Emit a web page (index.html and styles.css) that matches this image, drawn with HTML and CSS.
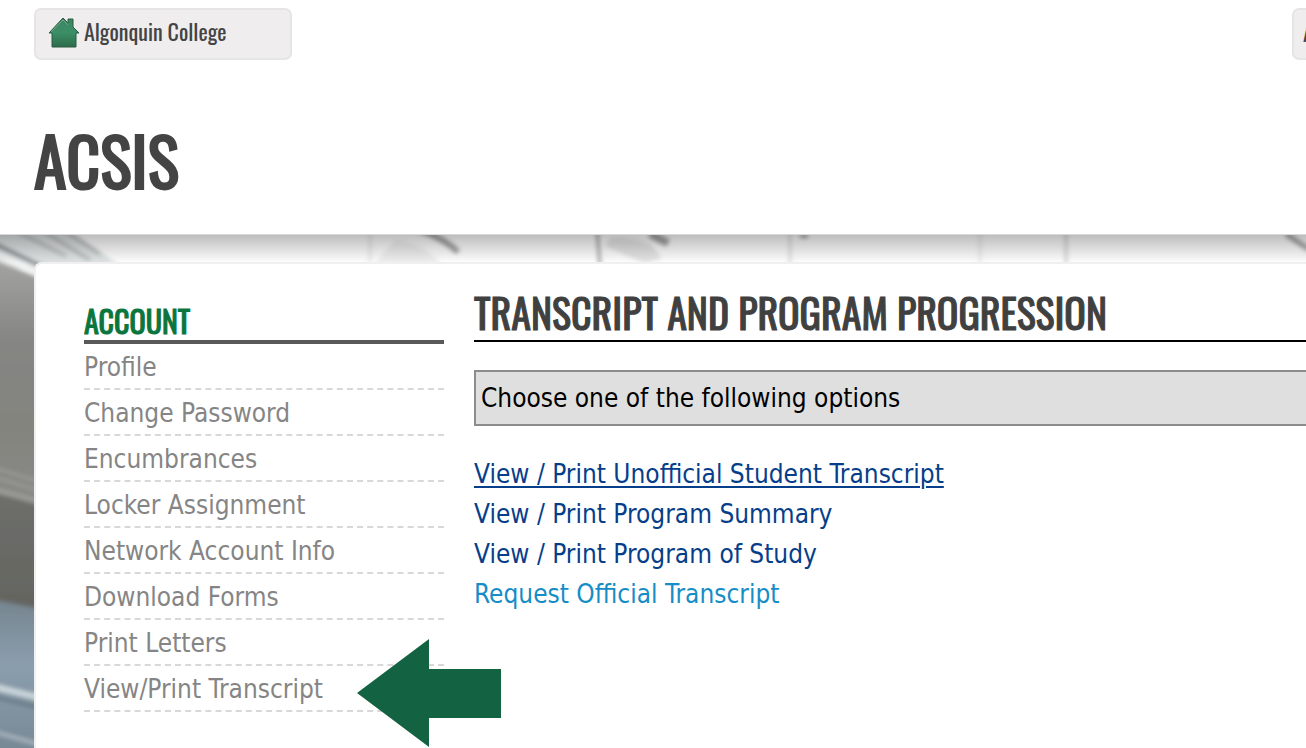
FILE: index.html
```html
<!DOCTYPE html>
<html lang="en">
<head>
    <meta charset="UTF-8">
    <meta name="viewport" content="width=device-width, initial-scale=1.0">
    <title>ACSIS</title>
    <link rel="stylesheet" href="styles.css">
</head>
<body>
    <header class="header">
        <div class="topbar">
            <a class="tab" href="#">
                <svg class="home" viewBox="0 0 32 32" aria-hidden="true">
                    <defs>
                        <linearGradient id="roof" x1="0" y1="0" x2="0" y2="1">
                            <stop offset="0" stop-color="#3f8462"/>
                            <stop offset="0.5" stop-color="#3b8f67"/>
                            <stop offset="1" stop-color="#2d6b4b"/>
                        </linearGradient>
                    </defs>
                    <path d="M1 17 L15 2 L20 7 V3 H25 V11 L31 17 H28 V31 H4 V17 Z" fill="url(#roof)" stroke="#285c41" stroke-width="1"/>
                    <path d="M3 16 L15 4 L20 9" fill="none" stroke="#6ba88a" stroke-width="1"/>
                </svg>
                <span>Algonquin College</span>
            </a>
            <a class="tab tab-next" href="#">A</a>
        </div>
        <h1 class="title">ACSIS</h1>
    </header>
    <div class="stage">
        <svg class="backdrop" aria-hidden="true">
            <defs>
                <linearGradient id="wall" x1="0" y1="0" x2="0" y2="1">
                    <stop offset="0" stop-color="#a3a3a1"/>
                    <stop offset="0.3" stop-color="#858583"/>
                    <stop offset="0.6" stop-color="#84847f"/>
                    <stop offset="1" stop-color="#8b8b88"/>
                </linearGradient>
                <linearGradient id="beam" x1="0" y1="0" x2="0" y2="1">
                    <stop offset="0" stop-color="#6e6f6b"/>
                    <stop offset="1" stop-color="#63635f"/>
                </linearGradient>
                <linearGradient id="glass" x1="0" y1="0" x2="0" y2="1">
                    <stop offset="0" stop-color="#76858f"/>
                    <stop offset="0.4" stop-color="#8b9eae"/>
                    <stop offset="1" stop-color="#758591"/>
                </linearGradient>
                <filter id="soft" filterUnits="userSpaceOnUse" x="-20" y="-20" width="1400" height="600"><feGaussianBlur stdDeviation="2"/></filter>
            </defs>
            <rect width="100%" height="100%" fill="#ffffff"/>
            <g filter="url(#soft)">
                <path d="M-10 -10 H60 L125 35 H-10 Z" fill="#dfe3e4"/>
                <path d="M-5 26 L50 48 V300 H-5 Z" fill="url(#wall)"/>
                <path d="M-5 10 L45 34" stroke="#7d8284" stroke-width="4"/>
                <path d="M-5 20 L45 42" stroke="#f2f3f3" stroke-width="6"/>
                <path d="M14 -4 L66 22 M38 -6 L90 26 M62 -5 L100 20" stroke="#b0b4b4" stroke-width="3" fill="none"/>
                <path d="M-5 234 L40 248 M-5 243 L40 257" stroke="#a0a09c" stroke-width="2"/>
                <path d="M-5 257 L50 272 V390 H-5 Z" fill="url(#beam)"/>
                <path d="M-5 256 L40 268" stroke="#9c9d98" stroke-width="5"/>
                <path d="M-5 366 L50 377 V530 H-5 Z" fill="url(#glass)"/>
                <path d="M-5 453 L45 465" stroke="#ccd7dc" stroke-width="6"/>
                <path d="M-5 463 L45 475" stroke="#6a7b87" stroke-width="4"/>
                <path d="M-5 498 L45 512" stroke="#aebbc4" stroke-width="3"/>
            </g>
            <g filter="url(#soft)" fill="none" stroke="#a3a3a3">
                <path d="M370 -5 V32 M980 -5 V32" stroke="#e8e8e8" stroke-width="3"/>
                <path d="M395 6 Q425 8 445 35 H370 Z" fill="#f0f0f0" stroke="none"/>
                <path d="M420 -4 Q445 5 458 18" stroke-width="6"/>
                <path d="M597 -5 L600 32" stroke-width="3"/>
                <path d="M610 4 Q630 2 650 10 L662 24 L645 30 L605 12" fill="#e6e6e6" stroke="none"/>
                <path d="M650 0 L668 9" stroke-width="8"/>
                <path d="M790 -5 V32" stroke="#dcdcdc" stroke-width="3"/>
                <path d="M800 2 H808" stroke-width="4"/>
                <path d="M1066 -5 V32" stroke="#d4d4d4" stroke-width="3"/>
                <path d="M1286 0 L1310 16" stroke-width="5"/>
            </g>
        </svg>
        <main class="card">
            <nav class="sidebar" aria-labelledby="account">
                <h2 class="sidebar-title" id="account">ACCOUNT</h2>
                <ul class="menu">
                    <li class="menu-item"><a href="#">Profile</a></li>
                    <li class="menu-item"><a href="#">Change Password</a></li>
                    <li class="menu-item"><a href="#">Encumbrances</a></li>
                    <li class="menu-item"><a href="#">Locker Assignment</a></li>
                    <li class="menu-item"><a href="#">Network Account Info</a></li>
                    <li class="menu-item"><a href="#">Download Forms</a></li>
                    <li class="menu-item"><a href="#">Print Letters</a></li>
                    <li class="menu-item">
                        <a href="#">View/Print Transcript</a>
                        <svg class="arrow" viewBox="0 0 144 108" aria-hidden="true">
                            <path d="M0 54 L72 0 V30 H144 V79 H72 V108 Z" fill="#136342"/>
                        </svg>
                    </li>
                </ul>
            </nav>
            <section class="content">
                <h2 class="content-title">TRANSCRIPT AND PROGRAM PROGRESSION</h2>
                <p class="notice">Choose one of the following options</p>
                <ul class="options">
                    <li><a class="current" href="#">View / Print Unofficial Student Transcript</a></li>
                    <li><a href="#">View / Print Program Summary</a></li>
                    <li><a href="#">View / Print Program of Study</a></li>
                    <li><a class="request" href="#">Request Official Transcript</a></li>
                </ul>
            </section>
        </main>
    </div>
</body>
</html>
```
FILE: styles.css
```css
*{
    box-sizing: border-box;
}
body{
    margin: 0;
    min-height: 100vh;
    display: flex;
    flex-direction: column;
    overflow: hidden;
    background-color: #fff;
    font-family: Tahoma, "DejaVu Sans Condensed", "Noto Sans", sans-serif;
    font-size: 26px;
}
h1, h2, p, ul{
    margin: 0;
    padding: 0;
}
h1, h2{
    font-weight: 400;
    -webkit-text-stroke: 1px currentColor;
}
ul{
    list-style: none;
}
a{
    text-decoration: none;
}
.header{
    padding: 8px 0 30px 34px;
    overflow: hidden;
}
.topbar{
    display: flex;
    justify-content: space-between;
}
.tab{
    flex: none;
    width: 258px;
    height: 52px;
    display: flex;
    align-items: center;
    gap: 4px;
    padding: 0 12px 4px;
    border: 2px solid #e6e5e5;
    border-radius: 7px;
    background-color: #efedee;
    color: #444;
    font-family: Oswald, "Liberation Sans Narrow", "Liberation Sans", sans-serif;
    font-size: 22px;
    line-height: 40px;
}
.tab span{
    padding-bottom: 2px;
}
.tab-next{
    margin-right: -244px;
    padding-left: 9px;
}
.home{
    width: 32px;
    height: 32px;
}
.title{
    margin-top: 54px;
    color: #444;
    font-family: Oswald, "Liberation Sans Narrow", "Liberation Sans", sans-serif;
    font-size: 66px;
    line-height: 90px;
    -webkit-text-stroke-width: 2px;
}
.stage{
    flex: 1;
    position: relative;
    display: flex;
    padding: 28px 0 0 34px;
    overflow: hidden;
}
.backdrop{
    position: absolute;
    top: 0;
    left: 0;
    width: 100%;
    height: 100%;
}
.stage::before{
    content: "";
    position: absolute;
    z-index: 1;
    top: 0;
    left: 0;
    width: 100%;
    height: 28px;
    border-top: 1px solid #d8d8d8;
    background: linear-gradient(rgba(0, 0, 0, 0.26), rgba(0, 0, 0, 0));
}
.card{
    flex: 1;
    position: relative;
    display: flex;
    gap: 30px;
    padding: 24px 0 34px 48px;
    border: 2px solid #f0f0f0;
    border-width: 2px 0 0 2px;
    border-radius: 8px 0 0 0;
    background-color: #fff;
}
.sidebar{
    flex: none;
    width: 360px;
    padding-top: 15px;
}
.sidebar-title{
    padding-bottom: 1px;
    border-bottom: 4px solid #595959;
    color: #0a753d;
    font-family: Oswald, "Liberation Sans Narrow", "Liberation Sans", sans-serif;
    font-size: 30px;
    line-height: 36px;
}
.menu-item{
    position: relative;
    height: 46px;
    border-bottom: 2px dashed #d8d8d8;
    line-height: 46px;
}
.menu-item a{
    color: #858585;
}
.arrow{
    position: absolute;
    top: -27px;
    left: 273px;
    width: 144px;
    height: 108px;
}
.content{
    flex: 1;
}
.content-title{
    border-bottom: 2px solid #000;
    padding-bottom: 4px;
    color: #404040;
    font-family: Oswald, "Liberation Sans Narrow", "Liberation Sans", sans-serif;
    font-size: 40px;
    line-height: 48px;
    white-space: nowrap;
}
.notice{
    margin-top: 28px;
    padding: 0 5px;
    border: 2px solid #8c8c8c;
    border-right: 0;
    background-color: #dfdfdf;
    color: #000;
    line-height: 52px;
}
.options{
    margin-top: 28px;
    line-height: 40px;
}
.options a{
    color: #063e8a;
}
.options .current{
    text-decoration: underline;
    text-decoration-thickness: 2px;
    text-underline-offset: 3px;
}
.options .request{
    color: #168dc6;
}
```
